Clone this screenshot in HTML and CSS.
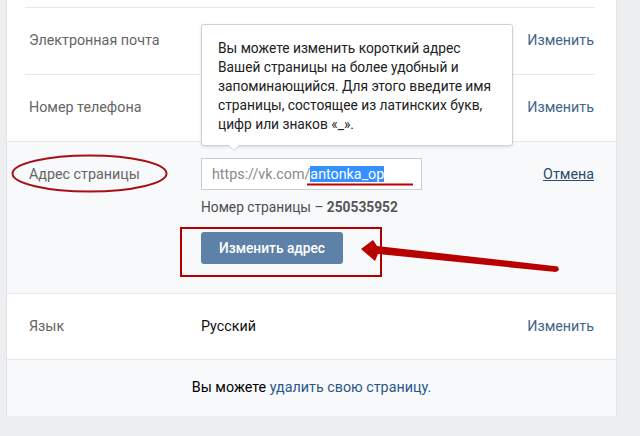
FILE: index.html
```html
<!DOCTYPE html>
<html lang="ru">
<head>
    <meta charset="UTF-8">
    <meta name="viewport" content="width=device-width, initial-scale=1.0">
    <title>Настройки</title>
    <link rel="stylesheet" href="styles.css">
</head>
<body>
    <div class="settings">
        <div class="row">
            <div class="row-label">Электронная почта</div>
            <div class="row-value"></div>
            <a class="row-action" href="#">Изменить</a>
        </div>
        <div class="row">
            <div class="row-label">Номер телефона</div>
            <div class="row-value"></div>
            <a class="row-action" href="#">Изменить</a>
        </div>

        <div class="row row-edit">
            <div class="row-label">Адрес страницы</div>
            <div class="row-value">
                <div class="address-input">
                    <span class="prefix">https://vk.com/</span><span class="selected">antonka_op</span>
                </div>
                <div class="page-id">Номер страницы – <b>250535952</b></div>
                <button class="btn-save">Изменить адрес</button>
            </div>
            <a class="row-action cancel" href="#">Отмена</a>
        </div>

        <div class="row row-last">
            <div class="row-label">Язык</div>
            <div class="row-value">Русский</div>
            <a class="row-action" href="#">Изменить</a>
        </div>

        <div class="footer">
            Вы можете <a href="#">удалить свою страницу.</a>
        </div>

        <div class="tooltip">
            Вы можете изменить короткий адрес<br>
            Вашей страницы на более удобный и<br>
            запоминающийся. Для этого введите имя<br>
            страницы, состоящее из латинских букв,<br>
            цифр или знаков «_».
        </div>
    </div>

    <!-- red marks drawn over the screenshot -->
    <svg class="marks" width="640" height="436" viewBox="0 0 640 436">
        <ellipse cx="89.5" cy="173.5" rx="77" ry="18" fill="none" stroke="#a80f14" stroke-width="2"/>
        <line x1="307" y1="184.5" x2="413" y2="184.5" stroke="#c00000" stroke-width="2"/>
        <rect x="181" y="228" width="200" height="48" fill="none" stroke="#b00000" stroke-width="2"/>
        <polygon points="361,249 373,240 377,246 558,266.5 559,270 556,272 378,254 375,261" fill="#b80000"/>
    </svg>
</body>
</html>
```

FILE: styles.css
```css
body {
    margin: 0;
    background-color: #edeef0;
    font-family: Roboto, "Open Sans", Arial, sans-serif;
    font-size: 14.3px;
    color: #000;
}

a {
    color: #42648b;
    text-decoration: none;
}

.settings {
    position: relative;
    width: 609px;
    margin-left: 7px;
    padding-top: 7px;
    background-color: #fff;
    box-shadow: 0 1px 0 0 #d7d8db, 0 0 0 1px #e3e4e8;
}

.row {
    display: grid;
    grid-template-columns: 172px 1fr auto;
    align-items: center;
    height: 67px;
    margin: 0 21px 0 18px;
    padding: 0 1px 2px 4px;
    border-top: 1px solid #e7e8ec;
    box-sizing: border-box;
}

.row-label {
    color: #656565;
}

.row-value {
    color: #111;
}

.row-action {
    text-align: right;
}

.row-edit {
    height: auto;
    align-items: start;
    margin: 0;
    padding: 16px 22px 29px 22px;
    background-color: #f8f9fb;
    border-bottom: 1px solid #e7e8ec;
}

.row-edit .row-label,
.row-edit .row-action {
    line-height: 32px;
}

.cancel {
    color: #2a4b6e;
    text-decoration: underline;
}

.row-last {
    height: 65px;
    border-top: none;
}

.address-input {
    width: 221px;
    height: 32px;
    box-sizing: border-box;
    padding: 0 10px;
    display: flex;
    align-items: center;
    background-color: #fff;
    border: 1px solid #c5ced8;
}

.prefix {
    color: #8a8a8a;
}

.selected {
    background-color: #3390ff;
    color: #fff;
    line-height: 16px;
}

.page-id {
    margin-top: 9px;
    line-height: 16px;
    font-size: 13.75px;
    color: #4d4d4d;
}

.page-id b {
    color: #555;
}

.btn-save {
    display: block;
    margin-top: 17px;
    width: 142px;
    height: 32px;
    border: none;
    border-radius: 3px;
    background-color: #5e81a8;
    color: #fff;
    font-family: inherit;
    font-size: 13.75px;
    font-weight: 500;
}

.footer {
    height: 56px;
    line-height: 54px;
    text-align: center;
    border-top: 1px solid #e7e8ec;
    background-color: #f8f9fb;
}

.footer a {
    color: #2a5885;
}

.tooltip {
    position: absolute;
    top: 24px;
    left: 194px;
    width: 312px;
    height: 122px;
    box-sizing: border-box;
    padding: 14px 16px 12px 16px;
    background-color: #fff;
    border: 1px solid #c9d2dc;
    border-radius: 3px;
    box-shadow: 0 1px 3px rgba(0, 0, 0, 0.12);
    font-size: 13.75px;
    line-height: 19px;
    color: #222;
    white-space: nowrap;
}

.tooltip::before,
.tooltip::after {
    content: "";
    position: absolute;
    left: 26px;
    border: 6px solid transparent;
}

.tooltip::before {
    top: 100%;
    border-top-color: #c9d2dc;
}

.tooltip::after {
    top: calc(100% - 1px);
    border-top-color: #fff;
}

.marks {
    position: absolute;
    top: 0;
    left: 0;
    pointer-events: none;
}
```
